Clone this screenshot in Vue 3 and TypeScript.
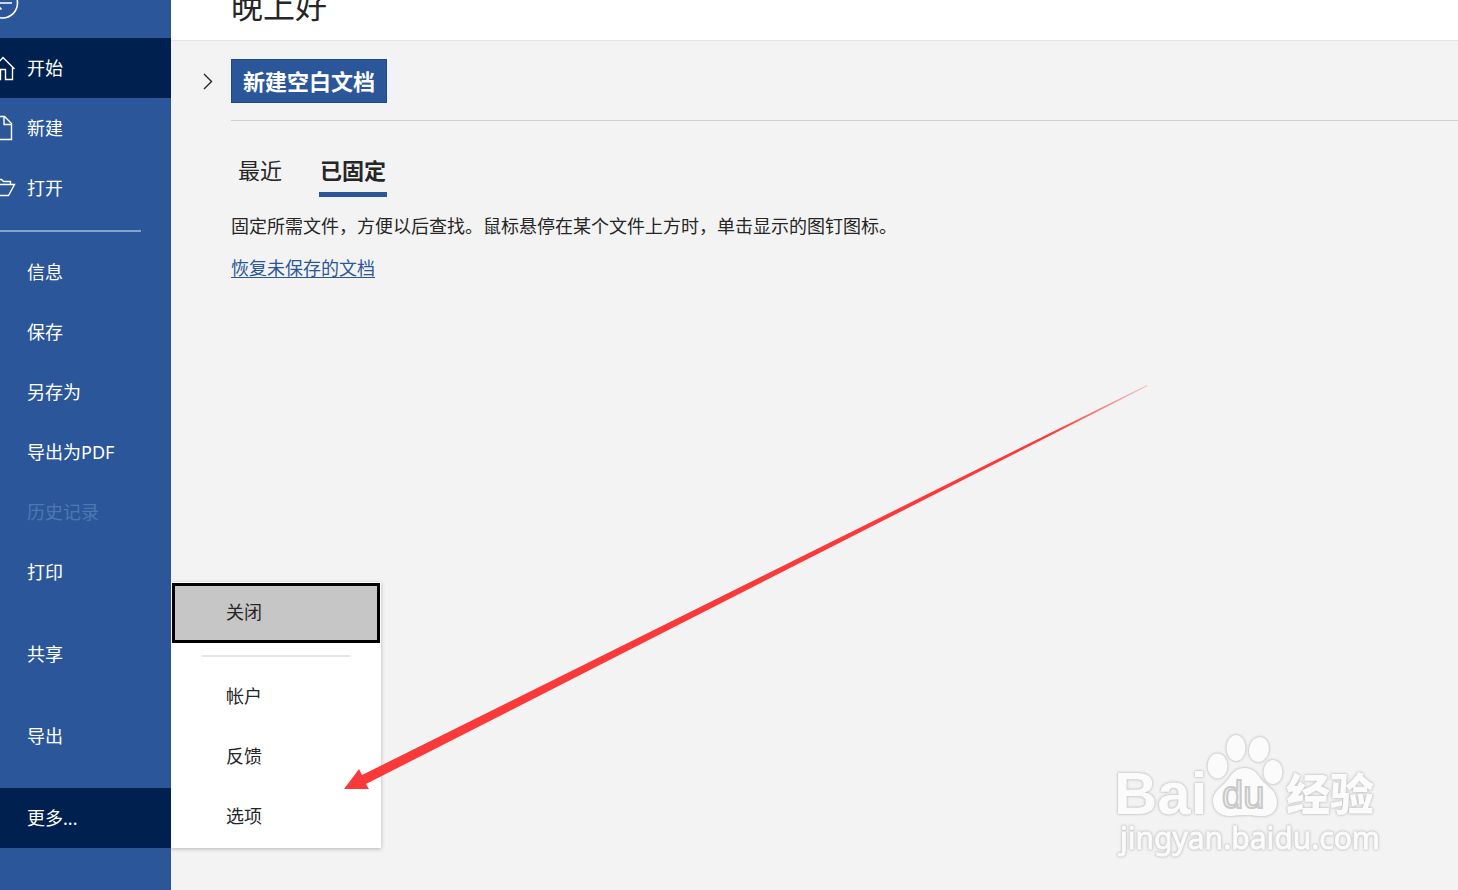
<script setup lang="ts">
import { ref } from 'vue'

interface NavItem {
  id: string
  label: string
  icon?: string[]
  disabled?: boolean
  spaced?: boolean
}

const primary: NavItem[] = [
  { id: 'home', label: '开始', icon: ['M-9 30.5 L3 17.5 L14.5 29', 'M12.5 27.500 V39.5 H5.5 V29.5 H0.5 V39.5 H-6 V28.5'] },
  { id: 'new', label: '新建', icon: ['M-5 16.5 H4.5 L11.5 23.5 V39.5 H-5 Z', 'M4 16.5 V24.5 H11.5'] },
  { id: 'open', label: '打开', icon: ['M-6 35.5 V19.5 H1.5 L3.5 21.5 H10.5 V24', 'M-6 35.5 L-1 24.5 H14.5 L8.5 35.5 Z'] },
]

const secondary: NavItem[] = [
  { id: 'info', label: '信息' },
  { id: 'save', label: '保存' },
  { id: 'save-as', label: '另存为' },
  { id: 'pdf', label: '导出为PDF' },
  { id: 'history', label: '历史记录', disabled: true },
  { id: 'print', label: '打印' },
  { id: 'share', label: '共享', spaced: true },
  { id: 'export', label: '导出', spaced: true },
]

const moreItems: string[] = ['帐户', '反馈', '选项']
const active = ref('home')
const tab = ref('pinned')
const menuOpen = ref(true)
</script>

<template>
  <div class="app" lang="zh-CN">
    <nav class="sidebar">
      <button class="back" type="button" aria-label="返回">
        <svg width="20" height="38" viewBox="0 0 20 38" fill="none" stroke="currentColor" stroke-width="1.6">
          <circle cx="2.5" cy="3" r="15" />
          <path d="M12 3 H-5 M-5 3 L1.5 9.5" />
        </svg>
      </button>
      <button
        v-for="item in primary"
        :key="item.id"
        type="button"
        class="nav"
        :class="{ current: active === item.id }"
        @click="active = item.id"
      >
        <svg class="nav-icon" width="20" height="56" viewBox="0 0 20 56" fill="none" stroke="currentColor" stroke-width="1.4">
          <path v-for="d in item.icon" :key="d" :d="d" />
        </svg>
        <span>{{ item.label }}</span>
      </button>
      <hr class="nav-rule" />
      <button
        v-for="item in secondary"
        :key="item.id"
        type="button"
        class="nav plain"
        :class="{ spaced: item.spaced, current: active === item.id }"
        :disabled="item.disabled"
        @click="active = item.id"
      >
        {{ item.label }}
      </button>
      <div class="more">
        <button type="button" class="nav plain current" :aria-expanded="menuOpen" @click="menuOpen = !menuOpen">更多...</button>
        <div v-if="menuOpen" class="menu">
          <button type="button" class="menu-item selected">关闭</button>
          <hr class="menu-rule" />
          <button v-for="m in moreItems" :key="m" type="button" class="menu-item">{{ m }}</button>
        </div>
      </div>
    </nav>

    <main class="content">
      <header class="header"><h1>晚上好</h1></header>
      <section class="create">
        <button class="expand" type="button" aria-label="展开">
          <svg width="12" height="18" viewBox="0 0 12 18" fill="none" stroke="currentColor" stroke-width="1.4">
            <path d="M3 2 L10.5 9.5 L3 17" />
          </svg>
        </button>
        <button class="blank" type="button">新建空白文档</button>
      </section>
      <section class="files">
        <div class="tabs">
          <button type="button" class="tab" :class="{ on: tab === 'recent' }" @click="tab = 'recent'">最近</button>
          <button type="button" class="tab" :class="{ on: tab === 'pinned' }" @click="tab = 'pinned'">已固定</button>
        </div>
        <p>固定所需文件，方便以后查找。鼠标悬停在某个文件上方时，单击显示的图钉图标。</p>
        <a href="#">恢复未保存的文档</a>
      </section>
    </main>

    <svg class="arrow" width="806" height="406" viewBox="0 0 806 406" aria-hidden="true">
      <defs>
        <linearGradient id="tail" x1="0" x2="1">
          <stop offset="0.88" stop-color="#fa3a3a" />
          <stop offset="1" stop-color="#fa3a3a" stop-opacity="0.25" />
        </linearGradient>
      </defs>
      <path d="M0 404 L15 384 L18 390 L803 0 L803.500 1 L22 399 L25 404 Z" fill="url(#tail)" />
    </svg>

    <svg class="watermark" width="280" height="140" viewBox="0 0 280 140" aria-hidden="true">
      <g class="mark">
        <text class="bai" x="4" y="84">Bai</text>
        <ellipse cx="107.500" cy="36" rx="10" ry="12.500" />
        <ellipse cx="126" cy="18" rx="9.500" ry="13" />
        <ellipse cx="149" cy="19.500" rx="10" ry="12.500" transform="rotate(10 149 19.500)" />
        <ellipse cx="163" cy="42" rx="9.500" ry="12" />
        <path d="M135 38 C143 38 147 43 151 49 C156 56 167 60 167 72 C167 83 159 87 149 86 C139 84.500 131 84.500 122 86 C111 87 103 81 103 71 C103 60 114 56 119 48 C123 42 127 38 135 38 Z" />
        <text class="exp" x="176" y="81">经验</text>
        <text class="site" x="10" y="119">jingyan.baidu.com</text>
      </g>
      <text class="du" x="112" y="78">du</text>
    </svg>
  </div>
</template>

<style>
body {
  margin: 0;
}
</style>

<style scoped>
.app {
  position: relative;
  display: flex;
  min-height: 100vh;
  overflow: hidden;
  background: #f3f3f3;
  color: #262626;
  font-family: "Noto Sans", "Noto Sans CJK SC", sans-serif;
  font-size: 18px;
}
button {
  margin: 0;
  padding: 0;
  border: 0;
  background: none;
  color: inherit;
  font: inherit;
  text-align: left;
  cursor: pointer;
}
hr {
  border: 0;
  margin: 0;
}
svg {
  display: block;
}
.sidebar {
  flex: 0 0 171px;
  background: #2b579a;
  color: #fff;
}
.back {
  display: block;
  height: 38px;
}
.nav {
  display: flex;
  align-items: center;
  width: 100%;
  height: 60px;
  gap: 7px;
  line-height: 26px;
}
.nav-icon {
  flex: none;
}
.nav.plain {
  padding-left: 27px;
}
.nav.current {
  background: #002050;
}
.nav:disabled {
  color: #4f78b3;
}
.nav-rule {
  height: 2px;
  margin: 12px 30px 10px 0;
  background: #83a4cc;
}
.spaced,
.more {
  margin-top: 22px;
}
.more {
  position: relative;
}
.menu {
  position: absolute;
  left: 100%;
  bottom: 0;
  z-index: 1;
  width: 208px;
  padding: 1px;
  background: #fff;
  color: #262626;
  box-shadow: 0 1px 4px rgba(0, 0, 0, 0.25);
  clip-path: inset(-6px -6px -6px 0);
}
.menu-item {
  display: block;
  box-sizing: border-box;
  width: 100%;
  height: 60px;
  padding: 0 0 2px 54px;
  line-height: 26px;
}
.menu-item.selected {
  padding-left: 51px;
  border: 3px solid #000;
  background: #c6c6c6;
}
.menu-rule {
  height: 2px;
  margin: 12px 30px 10px;
  background: #e5e5e5;
}
.content {
  flex: 1;
  min-width: 0;
}
.header {
  display: flex;
  align-items: flex-end;
  height: 40px;
  padding-left: 60px;
  border-bottom: 1px solid #e3e3e3;
  background: #fff;
}
h1 {
  margin: 0 0 12px;
  font-size: 32px;
  font-weight: 400;
  line-height: 44px;
}
.create {
  display: flex;
  align-items: center;
  padding: 18px 0 17px;
}
.expand {
  width: 30px;
  padding-left: 30px;
  box-sizing: content-box;
}
.blank {
  box-sizing: border-box;
  height: 44px;
  padding: 0 11px;
  border: 1px solid #1e4a85;
  background: #2b579a;
  color: #fff;
  font-size: 22px;
  font-weight: 700;
  line-height: 32px;
}
.files {
  margin-left: 60px;
  padding-top: 33px;
  border-top: 1px solid #d0d0d0;
}
.tabs {
  display: flex;
  gap: 30px;
}
.tab {
  padding: 0 7px 5px;
  border-bottom: 5px solid transparent;
  font-size: 22px;
  line-height: 33px;
}
.tab.on {
  padding: 0 1px 5px;
  border-color: #2b579a;
  font-weight: 700;
}
p {
  margin: 16px 0;
  line-height: 26px;
}
.files a {
  display: inline-block;
  color: #2b579a;
  line-height: 26px;
  text-underline-offset: 2px;
}
.arrow {
  position: absolute;
  left: 344px;
  top: 385px;
  z-index: 2;
  pointer-events: none;
}
.watermark {
  position: absolute;
  right: 68px;
  bottom: 20px;
  overflow: visible;
  pointer-events: none;
}
.mark {
  fill: #fbfbfb;
  filter: drop-shadow(0 0 1px #bdbdbd) drop-shadow(0 0 1px #d4d4d4);
}
.bai {
  font: 700 60px "Liberation Sans", sans-serif;
}
.exp {
  font: 900 44px "Noto Sans CJK SC", sans-serif;
}
.site {
  stroke: #fbfbfb;
  stroke-width: 1px;
  font: 400 30px "Noto Sans", sans-serif;
}
.du {
  fill: #f5f5f5;
  stroke: #c9c9c9;
  stroke-width: 2px;
  font: 400 38px "Liberation Sans", sans-serif;
}
</style>
